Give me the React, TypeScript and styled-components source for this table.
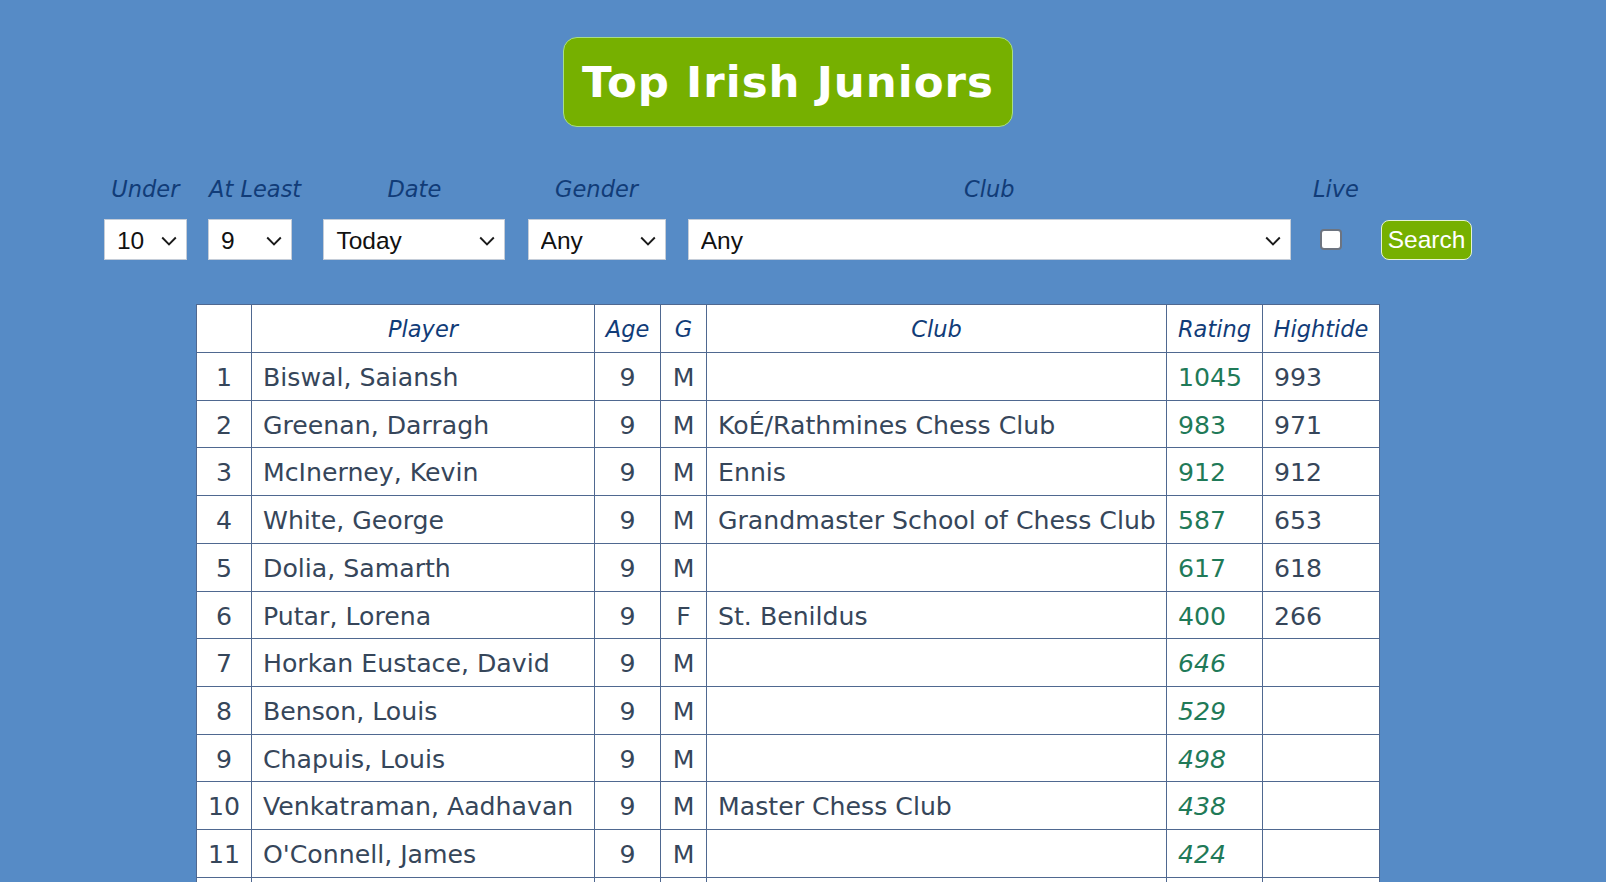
import React from "react";
import styled, { createGlobalStyle } from "styled-components";

const GlobalStyle = createGlobalStyle`
  html, body {
    margin: 0;
    padding: 0;
    background: #568bc6;
  }
  body {
    font-family: "DejaVu Sans", Verdana, sans-serif;
  }
`;

const Page = styled.div`
  display: flex;
  flex-direction: column;
  align-items: center;
  padding: 37px 30px 0 0;
  min-height: 100vh;
  box-sizing: border-box;
`;

const Title = styled.h1`
  margin: 0;
  width: 450px;
  height: 90px;
  box-sizing: border-box;
  display: flex;
  align-items: center;
  justify-content: center;
  background: #76b000;
  border: 1px solid #a8de86;
  border-radius: 14px;
  color: #ffffff;
  font-family: "DejaVu Sans", Verdana, sans-serif;
  font-weight: bold;
  font-size: 43.5px;
  letter-spacing: 1px;
`;

const Controls = styled.form`
  margin-top: 47.5px;
  display: flex;
  align-items: flex-start;
  gap: 22.2px;
`;

const Field = styled.div`
  display: flex;
  flex-direction: column;
  align-items: flex-start;
  gap: 16.5px;
  flex-shrink: 0;
`;

const Label = styled.label`
  align-self: stretch;
  height: 28px;
  line-height: 28px;
  text-align: center;
  font-style: italic;
  font-size: 22.5px;
  color: #113c78;
  white-space: nowrap;
`;

const SelectWrap = styled.div<{ $w: number; $shift?: number }>`
  position: relative;
  width: ${(p) => p.$w}px;
  height: 41px;
  margin-left: ${(p) => p.$shift || 0}px;
`;

const Select = styled.select`
  appearance: none;
  -webkit-appearance: none;
  width: 100%;
  height: 100%;
  box-sizing: border-box;
  margin: 0;
  padding: 1px 30px 0 12px;
  border: 1px solid #c5cdd8;
  border-radius: 0;
  background: #ffffff;
  color: #111111;
  font-family: "Liberation Sans", Arial, sans-serif;
  font-size: 24.5px;
  outline: none;
`;

const Chevron = styled.svg`
  position: absolute;
  right: 10px;
  top: 50%;
  width: 16px;
  height: 10px;
  margin-top: -4px;
  pointer-events: none;
`;

const ControlBox = styled.div`
  height: 41px;
  display: flex;
  align-items: center;
`;

const Checkbox = styled.input`
  appearance: none;
  -webkit-appearance: none;
  margin: 0 0 0 7.5px;
  width: 22px;
  height: 21px;
  box-sizing: border-box;
  border: 2px solid #6d7480;
  border-radius: 4px;
  background: #ffffff;
`;

const SearchButton = styled.button`
  margin-top: 0.5px;
  width: 91px;
  height: 40px;
  box-sizing: border-box;
  padding: 0;
  background: #76b000;
  border: 1px solid #e6f3d4;
  border-radius: 8px;
  color: #ffffff;
  font-family: "Liberation Sans", Arial, sans-serif;
  font-size: 24.5px;
  cursor: pointer;
`;

const Table = styled.table`
  margin-top: 44px;
  width: 1183px;
  table-layout: fixed;
  border-collapse: collapse;
  background: #ffffff;
  font-size: 25.2px;
  color: #36465a;
`;

const Th = styled.th<{ $align?: string }>`
  border: 1px solid #4f6890;
  padding: 1px 10px 0;
  height: 46px;
  line-height: 46px;
  font-weight: normal;
  font-style: italic;
  font-size: 22.5px;
  color: #113c78;
  text-align: ${(p) => p.$align || "center"};
  white-space: nowrap;
  overflow: hidden;
`;

const Td = styled.td<{ $align?: string; $kind?: "rating" | "est" }>`
  border: 1px solid #4f6890;
  padding: 3px 11px 0;
  height: 43.7px;
  line-height: 43.7px;
  white-space: nowrap;
  overflow: hidden;
  text-align: ${(p) => p.$align || "left"};
  color: ${(p) => (p.$kind ? "#1f7a58" : "#36465a")};
  font-style: ${(p) => (p.$kind === "est" ? "italic" : "normal")};
`;

const Col = styled.col<{ $w: number }>`
  width: ${(p) => p.$w}px;
`;

type Row = {
  name: string;
  age: string;
  g: string;
  club: string;
  rating: string;
  est?: boolean;
  high: string;
};

const rows: Row[] = [
  { name: "Biswal, Saiansh", age: "9", g: "M", club: "", rating: "1045", high: "993" },
  { name: "Greenan, Darragh", age: "9", g: "M", club: "KoÉ/Rathmines Chess Club", rating: "983", high: "971" },
  { name: "McInerney, Kevin", age: "9", g: "M", club: "Ennis", rating: "912", high: "912" },
  { name: "White, George", age: "9", g: "M", club: "Grandmaster School of Chess Club", rating: "587", high: "653" },
  { name: "Dolia, Samarth", age: "9", g: "M", club: "", rating: "617", high: "618" },
  { name: "Putar, Lorena", age: "9", g: "F", club: "St. Benildus", rating: "400", high: "266" },
  { name: "Horkan Eustace, David", age: "9", g: "M", club: "", rating: "646", est: true, high: "" },
  { name: "Benson, Louis", age: "9", g: "M", club: "", rating: "529", est: true, high: "" },
  { name: "Chapuis, Louis", age: "9", g: "M", club: "", rating: "498", est: true, high: "" },
  { name: "Venkatraman, Aadhavan", age: "9", g: "M", club: "Master Chess Club", rating: "438", est: true, high: "" },
  { name: "O'Connell, James", age: "9", g: "M", club: "", rating: "424", est: true, high: "" },
  { name: "", age: "", g: "", club: "", rating: "", est: true, high: "" },
];

const ChevronIcon = () => (
  <Chevron viewBox="0 0 16 10">
    <polyline points="1.2,1.5 8,8.3 14.8,1.5" fill="none" stroke="#1a1a1a" strokeWidth="1.9" />
  </Chevron>
);

const Dropdown = ({
  w,
  shift,
  value,
  options,
}: {
  w: number;
  shift?: number;
  value: string;
  options: string[];
}) => (
  <SelectWrap $w={w} $shift={shift}>
    <Select defaultValue={value}>
      {options.map((o) => (
        <option key={o} value={o}>
          {o}
        </option>
      ))}
    </Select>
    <ChevronIcon />
  </SelectWrap>
);

export default function App() {
  return (
    <>
      <GlobalStyle />
      <Page>
        <Title>Top Irish Juniors</Title>
        <Controls onSubmit={(e) => e.preventDefault()}>
          <Field>
            <Label>Under</Label>
            <Dropdown w={83} value="10" options={["8", "9", "10", "11", "12", "14", "16", "18"]} />
          </Field>
          <Field>
            <Label>At Least</Label>
            <Dropdown w={84} shift={-1} value="9" options={["6", "7", "8", "9"]} />
          </Field>
          <Field>
            <Label>Date</Label>
            <Dropdown w={182} value="Today" options={["Today"]} />
          </Field>
          <Field>
            <Label>Gender</Label>
            <Dropdown w={138} value="Any" options={["Any", "M", "F"]} />
          </Field>
          <Field>
            <Label>Club</Label>
            <Dropdown w={603} value="Any" options={["Any"]} />
          </Field>
          <Field>
            <Label>Live</Label>
            <ControlBox>
              <Checkbox type="checkbox" />
            </ControlBox>
          </Field>
          <Field>
            <Label />
            <SearchButton type="submit">Search</SearchButton>
          </Field>
        </Controls>
        <Table>
          <colgroup>
            <Col $w={55} />
            <Col $w={343} />
            <Col $w={66} />
            <Col $w={46} />
            <Col $w={460} />
            <Col $w={96} />
            <Col $w={117} />
          </colgroup>
          <thead>
            <tr>
              <Th></Th>
              <Th>Player</Th>
              <Th>Age</Th>
              <Th>G</Th>
              <Th>Club</Th>
              <Th>Rating</Th>
              <Th>Hightide</Th>
            </tr>
          </thead>
          <tbody>
            {rows.map((r, i) => (
              <tr key={i}>
                <Td $align="center">{r.name ? i + 1 : ""}</Td>
                <Td>{r.name}</Td>
                <Td $align="center">{r.age}</Td>
                <Td $align="center">{r.g}</Td>
                <Td>{r.club}</Td>
                <Td $kind={r.est ? "est" : "rating"}>{r.rating}</Td>
                <Td>{r.high}</Td>
              </tr>
            ))}
          </tbody>
        </Table>
      </Page>
    </>
  );
}
